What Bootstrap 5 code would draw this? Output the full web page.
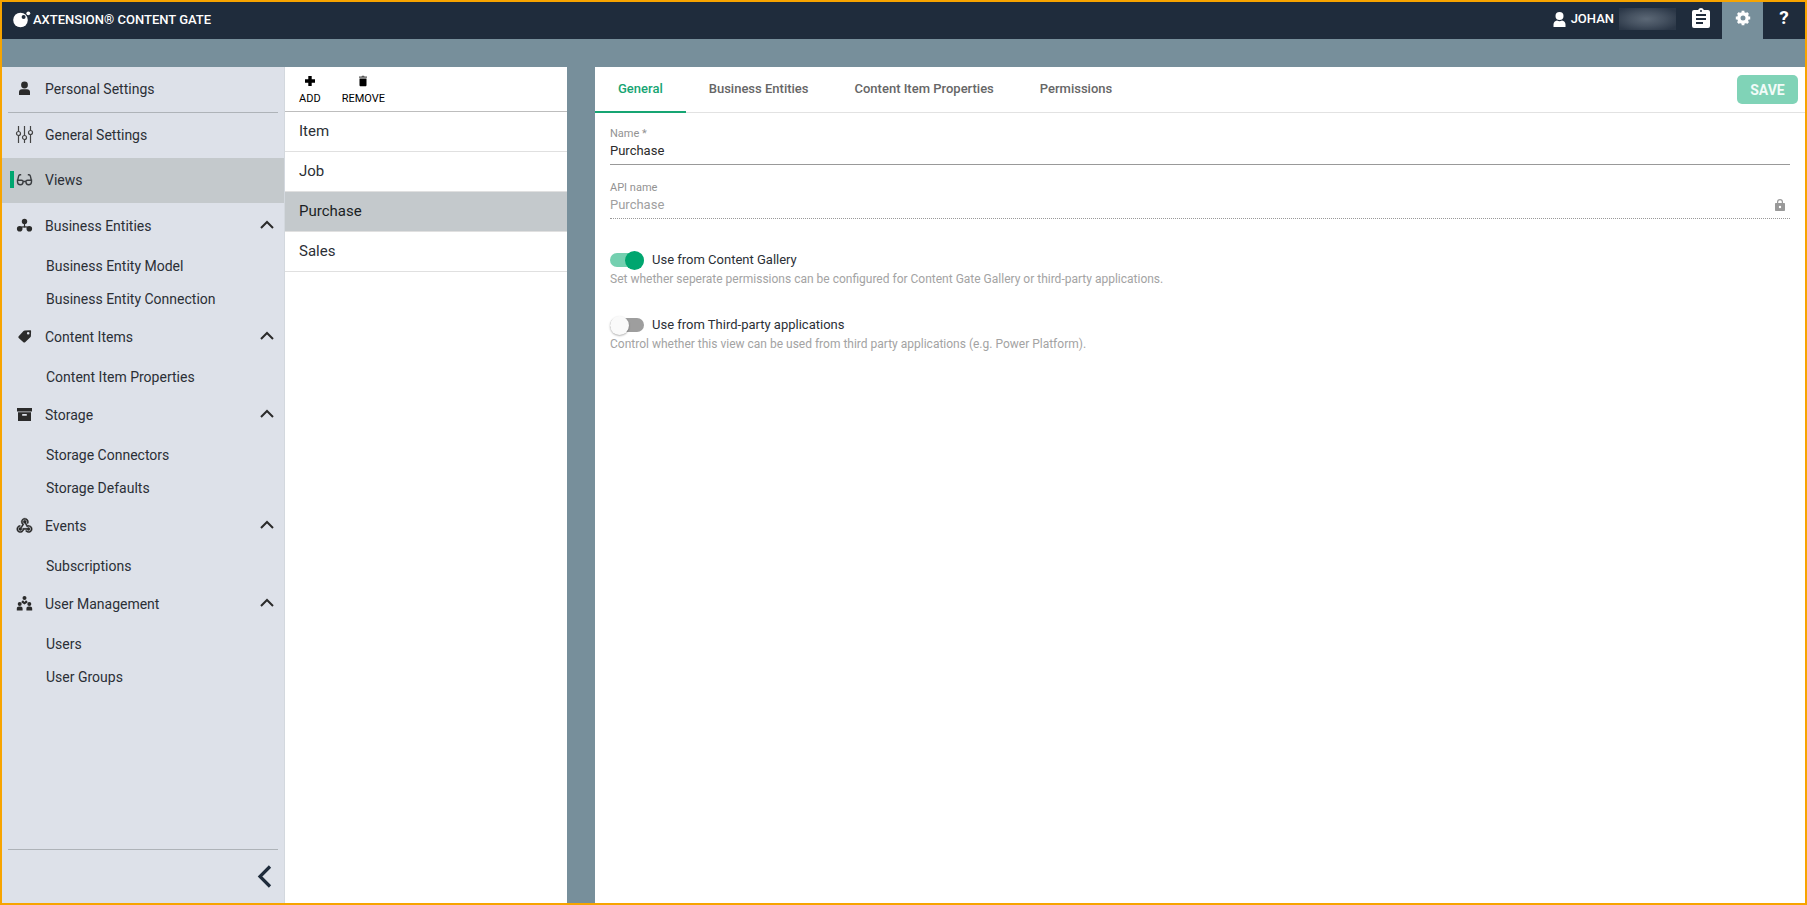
<!DOCTYPE html>
<html lang="en">
<head>
<meta charset="utf-8">
<meta name="viewport" content="width=device-width, initial-scale=1">
<title>Axtension Content Gate - Views</title>
<link href="https://cdn.jsdelivr.net/npm/bootstrap@5.3.0/dist/css/bootstrap.min.css" rel="stylesheet">
<style>
  body { font-family: Roboto, "Liberation Sans", sans-serif; font-size: 14px; line-height: 20px; color: #2b2f36; background: #fff; }
  .app { border: 2px solid #f7a400; background: #778f9b; }
  .topbar { background: #1f2c3c; height: 37px; color: #fff; font-size: 13px; font-weight: 500; }
  .topbar svg { display: block; fill: #fff; }
  .brand { color: #fff; padding-left: 11px; gap: 2px; padding-bottom: 4px; }
  .brand span { padding-top: 2px; }
  .user-menu { gap: 5px; padding-bottom: 3px; margin-right: 16px; }
  .redacted { width: 57px; height: 22px; background: radial-gradient(ellipse 62% 62% at 48% 50%, #5c6876, #465261 50%, #2b3747); }
  .bar-btn { width: 41px; height: 37px; border: 0; border-radius: 0; padding: 0 0 5px; color: #fff; background: transparent; font-size: 19px; font-weight: 700; display: flex; align-items: center; justify-content: center; }
  .bar-btn.current { background: #778f9b; }
  .bar-btn.slim { width: 18px; margin-right: 12px; padding-bottom: 3px; }
  .bar-btn.help { width: 42px; }
  .workspace { padding-top: 28px; }
  .sidebar { width: 283px; background: #dde1e9; border-right: 1px solid #d3d8de; }
  .side-row { height: 45px; padding: 0 10px 0 13px; color: #2b2f36; gap: 11px; text-decoration: none; background: transparent; border: 0; width: 100%; display: flex; align-items: center; text-align: left; }
  a.side-row { padding-bottom: 2px; }
  .side-row > svg:first-child { width: 19px; height: 19px; flex: none; fill: #2b2b2b; }
  .side-row .chev { margin-left: auto; margin-bottom: 3px; }
  .side-row.current { background: #c4c9cc; padding-left: 8px; gap: 1px; }
  .side-row.current::before { content: ""; width: 4px; height: 17px; background: #00a66f; }
  .side-row.current > svg { margin-right: 10px; }
  .side-sub { height: 33px; padding: 2px 0 0 44px; color: #2b2f36; text-decoration: none; display: flex; align-items: center; }
  .rule { height: 1px; margin: 0 6px; background: #aeb3b8; }
  .collapse-btn { height: 53px; border: 0; background: transparent; padding: 0 12px 0 0; display: flex; align-items: center; justify-content: flex-end; width: 100%; }
  .view-list { width: 282px; background: #fff; }
  .tools { height: 45px; padding: 8px 10px 0; gap: 13px; border-bottom: 1px solid #bdbdbd; }
  .tool { border: 0; background: transparent; padding: 0 4px; font-size: 11px; line-height: 14px; font-weight: 400; color: #000; display: flex; flex-direction: column; align-items: center; gap: 5px; }
  .view-row { height: 40px; padding: 0 14px 2px; border-bottom: 1px solid #e0e0e0; font-size: 15px; color: #2b2f36; text-decoration: none; display: flex; align-items: center; }
  .view-row.current { background: #c4c9cc; color: #1b1f24; }
  .detail { margin-left: 28px; background: #fff; min-width: 0; }
  .tabbar { height: 46px; border-bottom: 1px solid #e2e2e2; }
  .tabbar .nav-link { height: 46px; padding: 12px 23px 0; border-radius: 0; border: 0; font-size: 13px; font-weight: 500; color: #666; }
  .tabbar .nav-link.active { color: #16a573; background: transparent; border-bottom: 2px solid #16a573; }
  .save { width: 61px; height: 29px; padding: 1px 0 0; margin: 0 7px 0 auto; border: 0; border-radius: 5px; font-size: 14px; font-weight: 700; --bs-btn-disabled-bg: #80d3b7; --bs-btn-disabled-color: #f2fbf8; --bs-btn-disabled-opacity: 1; }
  .form-area { padding: 14px 15px; }
  .field { border-bottom: 1px solid #999; height: 38px; margin-bottom: 16px; position: relative; }
  .field.locked { border-bottom-style: dotted; margin-bottom: 31px; }
  .field label { display: block; font-size: 11px; line-height: 14px; color: #929292; }
  .field input { border: 0; padding: 0; border-radius: 0; font-size: 13px; line-height: 20px; min-height: 0; color: #2b2b2b; box-shadow: none; background: transparent; }
  .field.locked input:disabled { color: #a0a0a0; background: transparent; }
  .field svg { position: absolute; right: 4px; top: 17px; fill: #999; }
  .option { margin-bottom: 27px; }
  .option .form-switch { padding: 0; margin: 0; min-height: 0; display: flex; align-items: center; gap: 8px; height: 20px; font-size: 13px; }
  .option .form-check-input { width: 34px; height: 14px; margin: 0; border: 0; float: none; border-radius: 7px; background: #9e9e9e; display: flex; align-items: center; box-shadow: none; }
  .option .form-check-input::before { content: ""; width: 19px; height: 19px; flex: none; border-radius: 50%; background: #fafafa; box-shadow: 0 1px 2px rgba(0,0,0,.3); }
  .option .form-check-input:checked { background: #74d0b0; justify-content: flex-end; }
  .option .form-check-input:checked::before { background: #00a66f; box-shadow: none; }
  .hint { font-size: 12px; line-height: 18px; color: #a3a3a3; margin: 0; }
</style>
</head>
<body>
<div class="app min-vh-100 d-flex flex-column">
  <header class="topbar d-flex align-items-center">
    <a class="brand d-flex align-items-center text-decoration-none" href="#">
      <svg width="18" height="18" viewBox="0 0 18 18"><circle cx="7.500" cy="10" r="7.300"/><circle cx="10.600" cy="7" r="2" fill="#1f2c3c"/><circle cx="15.300" cy="3.300" r="1.900"/></svg>
      <span>AXTENSION® CONTENT GATE</span>
    </a>
    <div class="user-menu d-flex align-items-center ms-auto">
      <svg width="13" height="15" viewBox="0 0 13 15"><circle cx="6.500" cy="4" r="4"/><path d="M.5 15v-2.500C.5 10 2 9 4 8.500c1.500.9 3.500.9 5 0 2 .5 3.500 1.500 3.500 4V15z"/></svg>
      <span>JOHAN</span>
      <span class="redacted"></span>
    </div>
    <button class="bar-btn slim" type="button" aria-label="Tasks"><svg width="24" height="24" viewBox="0 0 24 24" class="flex-shrink-0"><path d="M17 9H7V7h10m0 6H7v-2h10m-3 6H7v-2h7M12 3a1 1 0 110 2 1 1 0 010-2m7 0h-4.180C14.400 1.840 13.300 1 12 1s-2.400.84-2.820 2H5a2 2 0 00-2 2v14a2 2 0 002 2h14a2 2 0 002-2V5a2 2 0 00-2-2z"/></svg></button>
    <button class="bar-btn current" type="button" aria-label="Settings"><svg width="16" height="16" viewBox="0 0 16 16"><circle cx="8" cy="8" r="4.200" fill="none" stroke="#fff" stroke-width="3.400"/><g stroke="#fff" stroke-width="2.800"><path d="M8 .8v2M8 13.200v2M.8 8h2M13.200 8h2M2.900 2.900l1.400 1.400M11.700 11.700l1.400 1.400M13.100 2.900l-1.400 1.400M4.300 11.700l-1.400 1.400"/></g></svg></button>
    <button class="bar-btn help" type="button">?</button>
  </header>

  <div class="workspace d-flex flex-grow-1 align-items-stretch">
    <nav class="sidebar d-flex flex-column flex-shrink-0">
      <a class="side-row" href="#"><svg viewBox="0 0 19 19"><circle cx="9.500" cy="6" r="3.400"/><path d="M4 16v-3c0-1.700 1.200-2.800 3-2.800h5c1.800 0 3 1.100 3 2.800v3z"/></svg>Personal Settings</a>
      <div class="rule"></div>
      <a class="side-row" href="#"><svg viewBox="0 0 19 19"><g fill="none" stroke="#444" stroke-width="1.200"><path d="M3.500 1v5.500M3.500 10.500V18M9.500 1v9.500M9.500 14.500V18M15.500 1v4.500M15.500 9.500V18"/><circle cx="3.500" cy="8.500" r="2"/><circle cx="9.500" cy="12.500" r="2"/><circle cx="15.500" cy="7.500" r="2"/></g></svg>General Settings</a>
      <a class="side-row current" href="#" aria-current="page"><svg viewBox="0 0 19 19"><path d="M2.500 10.300h4c1 0 1.600.5 1.600 1.300 0 2-.8 3.200-2.700 3.200-2 0-2.900-1.200-2.900-3zM16.500 10.300h-4c-1 0-1.600.5-1.600 1.300 0 2 .8 3.200 2.700 3.200 2 0 2.900-1.200 2.900-3zM8.100 11.500h2.800M2.500 10.800l1.200-5c.2-.8.700-1 1.300-1h1.200M16.500 10.800l-1.200-5c-.2-.8-.7-1-1.300-1h-1.200" fill="none" stroke="#3a3d40" stroke-width="1.400"/></svg>Views</a>

      <button class="side-row" type="button" aria-expanded="true"><svg viewBox="0 0 19 19"><circle cx="9.500" cy="5.500" r="2.700"/><circle cx="4.700" cy="12.800" r="2.800"/><circle cx="14.300" cy="12.800" r="2.800"/><path d="M9.500 5.500v6M4.700 12.500c1.500-1.800 3.200-1.800 4.800-1.400 1.600-.4 3.300-.4 4.800 1.400" fill="none" stroke="#2b2b2b" stroke-width="1.200"/></svg>Business Entities<svg class="chev" width="14" height="9" viewBox="0 0 14 9"><path d="M1 8l6-6 6 6" fill="none" stroke="#2b2b2b" stroke-width="2"/></svg></button>
      <a class="side-sub" href="#">Business Entity Model</a>
      <a class="side-sub" href="#">Business Entity Connection</a>

      <button class="side-row" type="button" aria-expanded="true"><svg viewBox="0 0 19 19"><path fill-rule="evenodd" d="M9.700 3.400l5.400-.2c.7 0 1 .4 1 1l-.2 4.800c0 .5-.2.9-.6 1.200l-5.200 5c-.5.500-1.200.5-1.700 0L3.700 11c-.5-.5-.5-1.200 0-1.700l4.800-5.300c.4-.4.800-.6 1.200-.6zm3.500 1.500a1.300 1.300 0 100 2.600 1.300 1.300 0 000-2.600z"/></svg>Content Items<svg class="chev" width="14" height="9" viewBox="0 0 14 9"><path d="M1 8l6-6 6 6" fill="none" stroke="#2b2b2b" stroke-width="2"/></svg></button>
      <a class="side-sub" href="#">Content Item Properties</a>

      <button class="side-row" type="button" aria-expanded="true"><svg viewBox="0 0 19 19"><path fill-rule="evenodd" d="M2 3h15v3.500H2zM3 7.200h13V16H3zM7.200 9v1.800h4.600V9z"/></svg>Storage<svg class="chev" width="14" height="9" viewBox="0 0 14 9"><path d="M1 8l6-6 6 6" fill="none" stroke="#2b2b2b" stroke-width="2"/></svg></button>
      <a class="side-sub" href="#">Storage Connectors</a>
      <a class="side-sub" href="#">Storage Defaults</a>

      <button class="side-row" type="button" aria-expanded="true"><svg viewBox="0 0 24 24" stroke="#1c1c1c" stroke-width=".5"><path d="M10.460 19C9 21.070 6.150 21.590 4.090 20.150 2.040 18.710 1.560 15.840 3 13.750 3.870 12.500 5.210 11.830 6.580 11.770L6.630 13.200C5.720 13.270 4.840 13.740 4.270 14.560 3.270 16 3.580 17.940 4.950 18.910 6.330 19.870 8.260 19.500 9.260 18.070 9.570 17.620 9.750 17.130 9.820 16.630V15.620L15.400 15.580 15.470 15.470C16 14.550 17.150 14.230 18.050 14.750 18.950 15.270 19.260 16.430 18.730 17.350 18.200 18.260 17.040 18.580 16.140 18.060 15.730 17.830 15.440 17.460 15.310 17.040L11.240 17.060C11.130 17.730 10.870 18.380 10.460 19M17.740 11.860C20.270 12.170 22.070 14.440 21.760 16.930 21.450 19.430 19.150 21.200 16.620 20.890 15.130 20.710 13.900 19.860 13.190 18.680L14.430 17.960C14.920 18.730 15.750 19.280 16.750 19.410 18.500 19.620 20.050 18.430 20.260 16.760 20.470 15.090 19.230 13.560 17.500 13.350 16.960 13.290 16.440 13.360 15.970 13.530L15.120 13.970 12.540 9.200H12.320C11.260 9.160 10.410 8.290 10.440 7.250 10.470 6.210 11.400 5.400 12.450 5.440 13.500 5.500 14.330 6.350 14.300 7.390 14.280 7.830 14.110 8.230 13.840 8.540L15.740 12.050C16.360 11.850 17.040 11.780 17.740 11.860M8.250 9.140C7.250 6.790 8.310 4.100 10.620 3.120 12.940 2.140 15.620 3.250 16.620 5.600 17.210 6.970 17.090 8.470 16.420 9.670L15.180 8.950C15.600 8.140 15.670 7.150 15.270 6.220 14.590 4.620 12.780 3.850 11.230 4.500 9.670 5.160 8.970 7 9.650 8.600 9.930 9.260 10.400 9.770 10.970 10.110L11.360 10.320 8.290 15.310C8.320 15.360 8.360 15.420 8.390 15.500 8.880 16.410 8.540 17.560 7.620 18.050 6.710 18.540 5.560 18.180 5.060 17.240 4.570 16.310 4.910 15.160 5.830 14.670 6.220 14.460 6.650 14.410 7.060 14.500L9.370 10.730C8.900 10.300 8.500 9.760 8.250 9.140Z"/></svg>Events<svg class="chev" width="14" height="9" viewBox="0 0 14 9"><path d="M1 8l6-6 6 6" fill="none" stroke="#2b2b2b" stroke-width="2"/></svg></button>
      <a class="side-sub" href="#">Subscriptions</a>

      <button class="side-row" type="button" aria-expanded="true"><svg viewBox="0 0 19 19"><circle cx="9.500" cy="4" r="2"/><path d="M6.500 8.500c0-1.400.8-2 1.800-2L9.500 8l1.200-1.500c1 0 1.800.6 1.800 2l-3 2z"/><circle cx="4.700" cy="10" r="2"/><circle cx="14.300" cy="10" r="2"/><path d="M1.800 16.500v-1.800c0-1.400.8-2.100 2.200-2.100h1.400c1.400 0 2.200.7 2.200 2.100v1.800zM11.400 16.500v-1.800c0-1.400.8-2.100 2.200-2.100H15c1.400 0 2.200.7 2.200 2.100v1.800z"/></svg>User Management<svg class="chev" width="14" height="9" viewBox="0 0 14 9"><path d="M1 8l6-6 6 6" fill="none" stroke="#2b2b2b" stroke-width="2"/></svg></button>
      <a class="side-sub" href="#">Users</a>
      <a class="side-sub" href="#">User Groups</a>

      <div class="mt-auto">
        <div class="rule"></div>
        <button class="collapse-btn" type="button" aria-label="Collapse menu"><svg width="15" height="23" viewBox="0 0 15 23"><path d="M13 1.500L3 11.500l10 10" fill="none" stroke="#1f2c3c" stroke-width="3.200"/></svg></button>
      </div>
    </nav>

    <section class="view-list flex-shrink-0">
      <div class="tools d-flex align-items-start">
        <button class="tool" type="button"><svg width="12" height="12" viewBox="0 0 12 12"><path d="M4.300 1h3.400v3.300H11v3.400H7.700V11H4.300V7.700H1V4.300h3.300z"/></svg>ADD</button>
        <button class="tool" type="button"><svg width="12" height="12" viewBox="0 0 12 12"><path d="M2.500 3.500h7V10c0 .8-.4 1.300-1.200 1.300H3.700c-.8 0-1.200-.5-1.200-1.300z"/><path d="M2 1.500h2.500L5 .8h2l.5.700H10v1.200H2z" fill="#555"/></svg>REMOVE</button>
      </div>
      <a class="view-row" href="#">Item</a>
      <a class="view-row" href="#">Job</a>
      <a class="view-row current" href="#" aria-current="true">Purchase</a>
      <a class="view-row" href="#">Sales</a>
    </section>

    <main class="detail flex-grow-1">
      <div class="tabbar d-flex align-items-center">
        <ul class="nav">
          <li class="nav-item"><a class="nav-link active" href="#">General</a></li>
          <li class="nav-item"><a class="nav-link" href="#">Business Entities</a></li>
          <li class="nav-item"><a class="nav-link" href="#">Content Item Properties</a></li>
          <li class="nav-item"><a class="nav-link" href="#">Permissions</a></li>
        </ul>
        <button class="btn save" type="button" disabled>SAVE</button>
      </div>
      <form class="form-area">
        <div class="field">
          <label for="name">Name *</label>
          <input class="form-control" id="name" type="text" value="Purchase">
        </div>
        <div class="field locked">
          <label for="api">API name</label>
          <input class="form-control" id="api" type="text" value="Purchase" disabled>
          <svg width="12" height="14" viewBox="0 0 12 14"><path fill-rule="evenodd" d="M3 5V4a3 3 0 016 0v1h1c.6 0 1 .4 1 1v6c0 .6-.4 1-1 1H2c-.6 0-1-.4-1-1V6c0-.6.4-1 1-1zm1.200 0h3.600V4a1.800 1.800 0 00-3.600 0zM6 7.800a1.200 1.200 0 100 2.400 1.200 1.200 0 000-2.400z"/></svg>
        </div>
        <div class="option">
          <div class="form-check form-switch">
            <input class="form-check-input" id="gallery" type="checkbox" role="switch" checked>
            <label for="gallery">Use from Content Gallery</label>
          </div>
          <p class="hint">Set whether seperate permissions can be configured for Content Gate Gallery or third-party applications.</p>
        </div>
        <div class="option">
          <div class="form-check form-switch">
            <input class="form-check-input" id="third" type="checkbox" role="switch">
            <label for="third">Use from Third-party applications</label>
          </div>
          <p class="hint">Control whether this view can be used from third party applications (e.g. Power Platform).</p>
        </div>
      </form>
    </main>
  </div>
</div>
<script src="https://cdn.jsdelivr.net/npm/bootstrap@5.3.0/dist/js/bootstrap.bundle.min.js"></script>
</body>
</html>
